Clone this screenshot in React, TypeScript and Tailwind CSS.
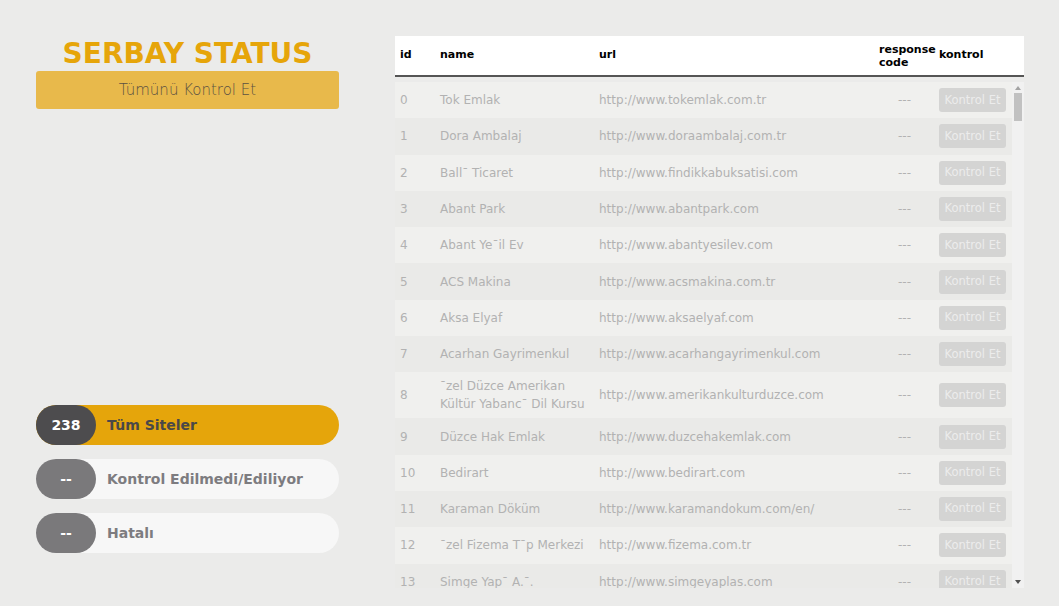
import React from "react";

type Site = { id: number; name: string; url: string; tall?: boolean };

const sites: Site[] = [
  { id: 0, name: "Tok Emlak", url: "http://www.tokemlak.com.tr" },
  { id: 1, name: "Dora Ambalaj", url: "http://www.doraambalaj.com.tr" },
  { id: 2, name: "Ball¯ Ticaret", url: "http://www.findikkabuksatisi.com" },
  { id: 3, name: "Abant Park", url: "http://www.abantpark.com" },
  { id: 4, name: "Abant Ye¯il Ev", url: "http://www.abantyesilev.com" },
  { id: 5, name: "ACS Makina", url: "http://www.acsmakina.com.tr" },
  { id: 6, name: "Aksa Elyaf", url: "http://www.aksaelyaf.com" },
  { id: 7, name: "Acarhan Gayrimenkul", url: "http://www.acarhangayrimenkul.com" },
  { id: 8, name: "¯zel Düzce Amerikan Kültür Yabanc¯ Dil Kursu", url: "http://www.amerikankulturduzce.com", tall: true },
  { id: 9, name: "Düzce Hak Emlak", url: "http://www.duzcehakemlak.com" },
  { id: 10, name: "Bedirart", url: "http://www.bedirart.com" },
  { id: 11, name: "Karaman Döküm", url: "http://www.karamandokum.com/en/" },
  { id: 12, name: "¯zel Fizema T¯p Merkezi", url: "http://www.fizema.com.tr" },
  { id: 13, name: "Simge Yap¯ A.¯.", url: "http://www.simgeyaplas.com" },
];

const StatPill = ({ count, label, active }: { count: string; label: string; active?: boolean }) => (
  <div className={`flex items-center h-10 rounded-full ${active ? "bg-[#e5a50b]" : "bg-[#f7f7f7]"}`}>
    <div
      className={`w-[60px] h-10 rounded-full flex items-center justify-center text-white font-bold text-[14px] ${
        active ? "bg-[#4d4c4e]" : "bg-[#7a797b]"
      }`}
    >
      {count}
    </div>
    <span className={`ml-[11px] font-bold text-[14px] ${active ? "text-[#4a4848]" : "text-[#7d7c80]"}`}>{label}</span>
  </div>
);

const App = () => {
  return (
    <div
      className="w-[1059px] h-[606px] overflow-hidden bg-[#ebebea] flex gap-[56px] px-[36px]"
      style={{ fontFamily: '"DejaVu Sans", "Noto Sans", sans-serif' }}
    >
      {/* Left panel */}
      <div className="w-[303px] shrink-0 flex flex-col pt-[37px]">
        <h1 className="text-center text-[28px] leading-[34px] font-bold text-[#e6a50a]">SERBAY STATUS</h1>
        <button className="h-[38px] rounded-[3px] bg-[#e8b94b] text-[15px] font-light text-[#5b5142]">
          Tümünü Kontrol Et
        </button>
        <div className="mt-[296px] flex flex-col gap-[14px]">
          <StatPill count="238" label="Tüm Siteler" active />
          <StatPill count="--" label="Kontrol Edilmedi/Ediliyor" />
          <StatPill count="--" label="Hatalı" />
        </div>
      </div>

      {/* Table */}
      <div className="flex-1 pt-[36px]">
        <div className="flex items-center h-[41px] bg-white border-b-2 border-[#555] text-[11px] font-semibold text-black">
          <div className="w-[40px] pl-[5px]">id</div>
          <div className="w-[159px] pl-[5px]">name</div>
          <div className="w-[280px] pl-[5px]">url</div>
          <div className="w-[60px] pl-[5px] leading-[13px]">
            response
            <br />
            code
          </div>
          <div className="pl-[5px]">kontrol</div>
        </div>
        <div className="mt-[5px] flex h-[506px] overflow-hidden">
          <div className="w-[617px] shrink-0">
            {sites.map((s) => (
              <div
                key={s.id}
                className={`flex items-center text-[12px] text-[#b2b2b2] ${s.tall ? "h-[46px]" : "h-[36.3px]"} ${
                  s.id % 2 === 0 ? "bg-[#f0f0ee]" : "bg-[#eaeae8]"
                }`}
              >
                <div className="w-[40px] pl-[5px]">{s.id}</div>
                <div className="w-[159px] pl-[5px] pr-[8px] leading-[18px]">{s.name}</div>
                <div className="w-[280px] pl-[5px]">{s.url}</div>
                <div className="w-[60px] text-center pl-[1px]">---</div>
                <div className="pl-[5px]">
                  <button className="w-[67px] h-[24px] rounded-[3px] bg-[#d4d4d3] text-[#ececec] text-[11.5px]">
                    Kontrol Et
                  </button>
                </div>
              </div>
            ))}
          </div>
          {/* scrollbar */}
          <div className="w-[12px] h-full bg-[#f1f1f1] flex flex-col items-center">
            <svg width="8" height="8" viewBox="0 0 8 8" className="mt-[2px]">
              <path d="M1 6 L4 2 L7 6 Z" fill="#a3a3a3" />
            </svg>
            <div className="w-[8px] h-[28px] bg-[#c1c1c1] mt-[1px]" />
            <div className="flex-1" />
            <svg width="8" height="8" viewBox="0 0 8 8" className="mb-[2px]">
              <path d="M1 2 L4 6 L7 2 Z" fill="#505050" />
            </svg>
          </div>
        </div>
      </div>
    </div>
  );
};

export default App;
